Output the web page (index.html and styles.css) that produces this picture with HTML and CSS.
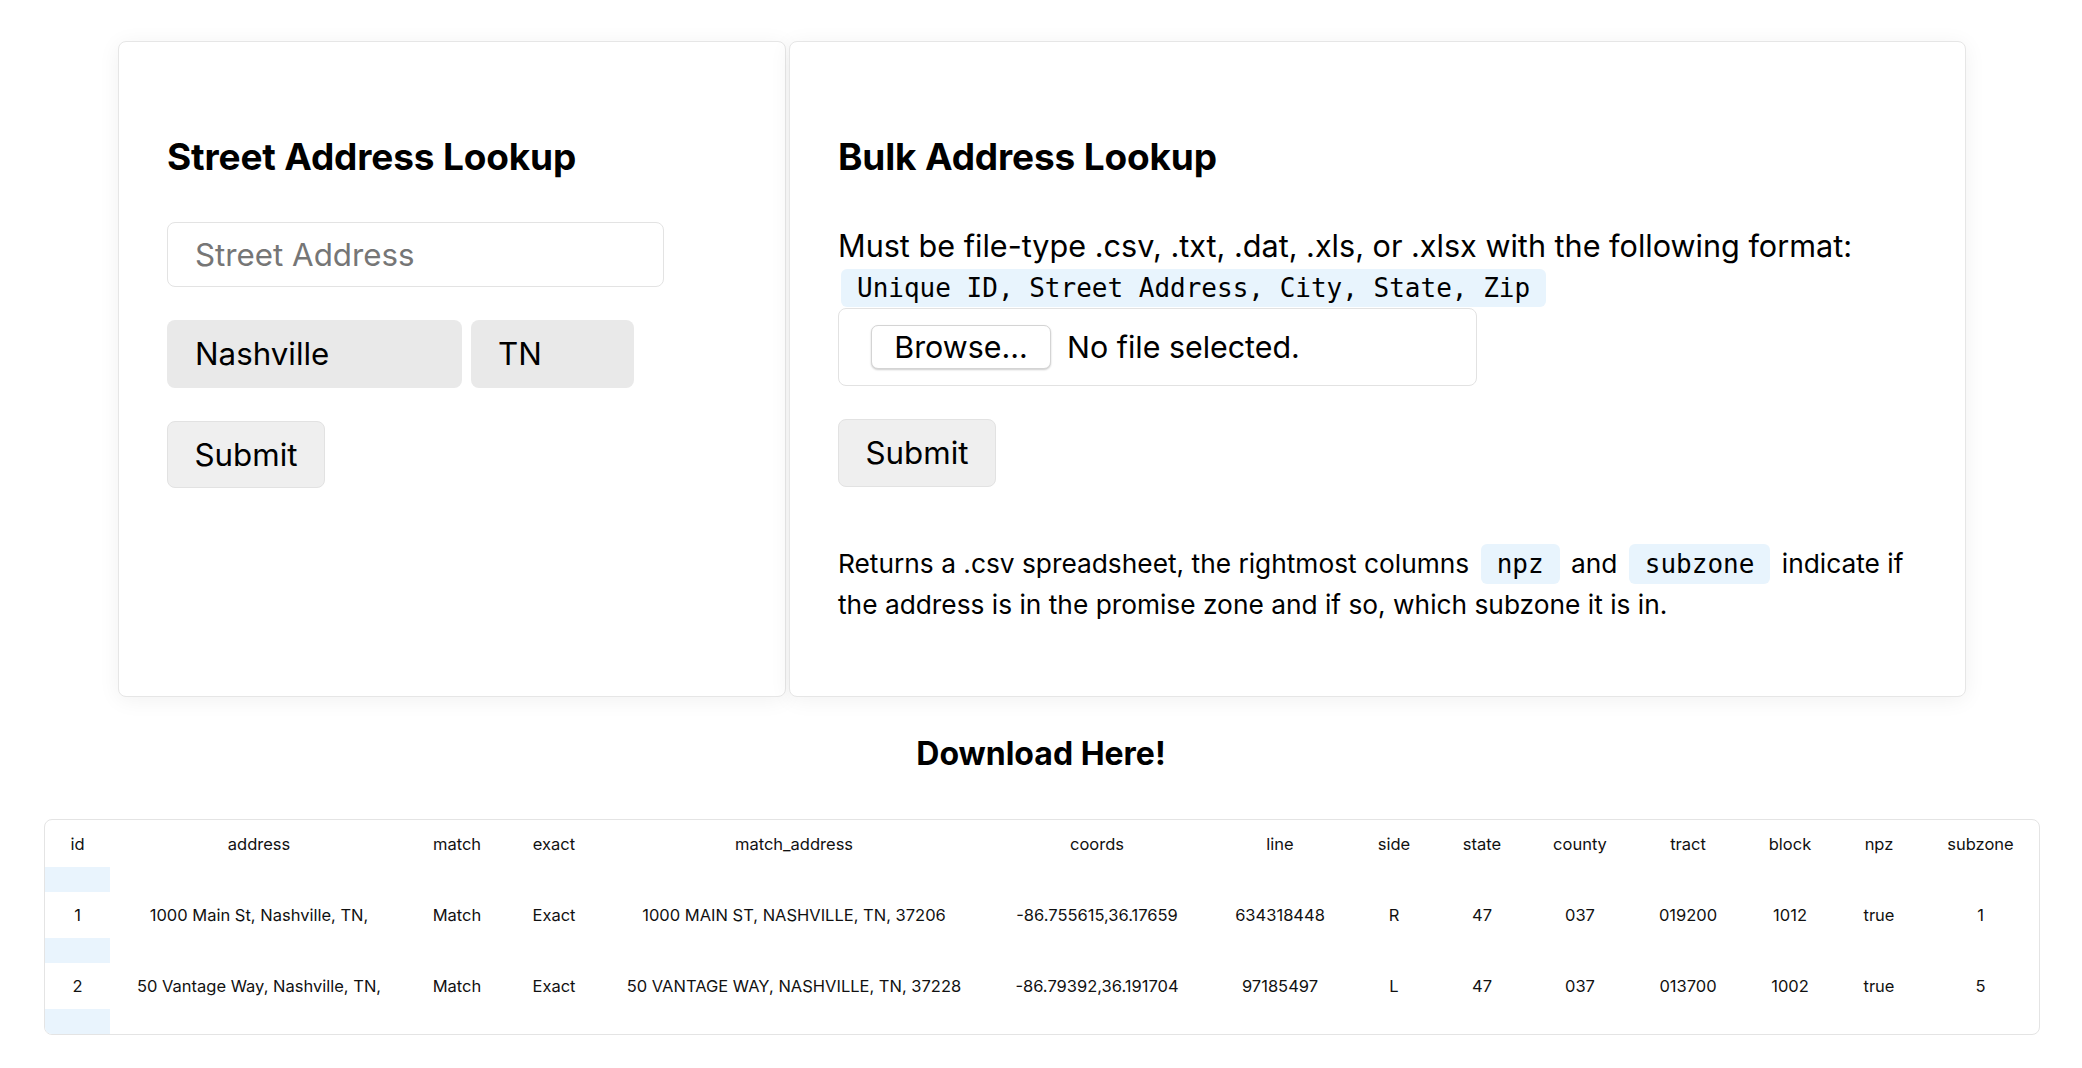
FILE: index.html
```html
<!DOCTYPE html>
<html lang="en">
<head>
<meta charset="utf-8">
<title>Address Lookup</title>
<link rel="stylesheet" href="styles.css">
</head>
<body>
<main class="page">
  <section class="cards">
    <div class="card card-single">
      <h2 class="card-title">Street Address Lookup</h2>
      <input class="street-input" type="text" placeholder="Street Address">
      <div class="locale-row">
        <div class="locale locale-city">Nashville</div>
        <div class="locale locale-state">TN</div>
      </div>
      <button class="submit-btn" type="button">Submit</button>
    </div>
    <div class="card card-bulk">
      <h2 class="card-title">Bulk Address Lookup</h2>
      <p class="format-text">Must be file-type .csv, .txt, .dat, .xls, or .xlsx with the following format:</p>
      <code class="code-block">Unique ID, Street Address, City, State, Zip</code>
      <div class="filebox">
        <span class="browse-btn">Browse...</span>
        <span class="file-status">No file selected.</span>
      </div>
      <button class="submit-btn" type="button">Submit</button>
      <p class="returns-text">Returns a .csv spreadsheet, the rightmost columns <code class="inline-code">npz</code> and <code class="inline-code">subzone</code> indicate if the address is in the promise zone and if so, which subzone it is in.</p>
    </div>
  </section>

  <h3 class="download-title">Download Here!</h3>

  <div class="table-wrap">
    <table class="results">
      <colgroup>
        <col class="c-id"><col class="c-address"><col class="c-match"><col class="c-exact"><col class="c-maddr"><col class="c-coords"><col class="c-line"><col class="c-side"><col class="c-state"><col class="c-county"><col class="c-tract"><col class="c-block"><col class="c-npz"><col class="c-subzone">
      </colgroup>
      <thead>
        <tr class="head-row">
          <th>id</th><th>address</th><th>match</th><th>exact</th><th>match_address</th><th>coords</th><th>line</th><th>side</th><th>state</th><th>county</th><th>tract</th><th>block</th><th>npz</th><th>subzone</th>
        </tr>
      </thead>
      <tbody>
        <tr class="spacer-row"><td></td><td></td><td></td><td></td><td></td><td></td><td></td><td></td><td></td><td></td><td></td><td></td><td></td><td></td></tr>
        <tr class="data-row">
          <td>1</td><td>1000 Main St, Nashville, TN,</td><td>Match</td><td>Exact</td><td>1000 MAIN ST, NASHVILLE, TN, 37206</td><td>-86.755615,36.17659</td><td>634318448</td><td>R</td><td>47</td><td>037</td><td>019200</td><td>1012</td><td>true</td><td>1</td>
        </tr>
        <tr class="spacer-row"><td></td><td></td><td></td><td></td><td></td><td></td><td></td><td></td><td></td><td></td><td></td><td></td><td></td><td></td></tr>
        <tr class="data-row">
          <td>2</td><td>50 Vantage Way, Nashville, TN,</td><td>Match</td><td>Exact</td><td>50 VANTAGE WAY, NASHVILLE, TN, 37228</td><td>-86.79392,36.191704</td><td>97185497</td><td>L</td><td>47</td><td>037</td><td>013700</td><td>1002</td><td>true</td><td>5</td>
        </tr>
        <tr class="spacer-row"><td></td><td></td><td></td><td></td><td></td><td></td><td></td><td></td><td></td><td></td><td></td><td></td><td></td><td></td></tr>
      </tbody>
    </table>
  </div>
</main>
</body>
</html>
```

FILE: styles.css
```css
* { box-sizing: border-box; }

html, body {
  margin: 0;
  padding: 0;
  background: #ffffff;
  color: #000000;
  font-family: Inter, "Noto Sans", "Liberation Sans", sans-serif;
}

.page {
  padding-top: 41px;
}

.cards {
  display: grid;
  grid-template-columns: 668px 1177px;
  gap: 3px;
  justify-content: start;
  margin-left: 118px;
}

.card {
  height: 656px;
  background: #ffffff;
  border: 1px solid #e6e6e6;
  border-radius: 8px;
  box-shadow: 0 3px 22px rgba(0, 0, 0, 0.06);
  padding: 48px;
  display: flex;
  flex-direction: column;
  align-items: flex-start;
}

.card-title {
  margin: 44px 0 0 0;
  font-size: 37px;
  line-height: 45px;
  font-weight: 700;
  letter-spacing: -0.15px;
}

.street-input {
  margin-top: 43px;
  width: 497px;
  height: 65px;
  border: 1px solid #e3e3e3;
  border-radius: 8px;
  padding: 0 27px;
  font-family: inherit;
  font-size: 31.3px;
  color: #000;
  background: #fff;
  outline: none;
}
.street-input::placeholder { color: #767676; }

.locale-row {
  margin-top: 33px;
  display: flex;
  gap: 9px;
}

.locale {
  height: 68px;
  background: #e9e9e9;
  border-radius: 8px;
  font-size: 31.3px;
  display: flex;
  align-items: center;
  padding-left: 28px;
}
.locale-city { width: 295px; }
.locale-state { width: 163px; padding-left: 27px; }

.submit-btn {
  margin-top: 33px;
  width: 158px;
  height: 67px;
  padding: 0;
  text-align: center;
  background: #efefef;
  border: 1px solid #e2e2e2;
  border-radius: 8px;
  font-family: inherit;
  font-size: 31.3px;
  color: #000;
}

.format-text {
  margin: 48px 0 0 0;
  font-size: 30.6px;
  line-height: 38px;
}

.code-block {
  display: block;
  margin: 4px 0 0 3px;
  height: 38px;
  line-height: 38px;
  padding: 0 16px;
  background: #e8f4fd;
  border-radius: 6px;
  font-family: "DejaVu Sans Mono", "Liberation Mono", monospace;
  font-size: 26px;
}

.filebox {
  margin-top: 1px;
  width: 639px;
  height: 78px;
  border: 1px solid #e2e2e2;
  border-radius: 8px;
  display: flex;
  align-items: center;
  padding-left: 32px;
  gap: 16px;
  font-size: 30.4px;
}

.browse-btn {
  height: 44px;
  width: 180px;
  display: flex;
  align-items: center;
  justify-content: center;
  background: #fff;
  border: 1px solid #d4d4d4;
  border-radius: 7px;
  box-shadow: 0 1px 2px rgba(0, 0, 0, 0.2);
}

.card-bulk .submit-btn { height: 68px; }

.returns-text {
  margin: 56px 0 0 0;
  font-size: 26.3px;
  line-height: 41px;
}

.inline-code {
  display: inline-block;
  font-family: "DejaVu Sans Mono", "Liberation Mono", monospace;
  font-size: 26px;
  line-height: 30px;
  background: #e8f4fd;
  border-radius: 6px;
  padding: 5px 16px;
  margin: 0 4px;
  vertical-align: baseline;
}

.download-title {
  margin: 39px 0 0 0;
  text-align: center;
  font-size: 32px;
  line-height: 36px;
  font-weight: 700;
}

.table-wrap {
  margin: 47px 0 0 44px;
  width: 1996px;
  border: 1px solid #e4e4e4;
  border-radius: 8px;
  overflow: hidden;
}

.results {
  width: 100%;
  table-layout: fixed;
  border-collapse: collapse;
  font-size: 16.5px;
  color: #111;
}

.results th,
.results td {
  text-align: center;
  padding: 0;
  white-space: nowrap;
  font-weight: 400;
}

.head-row { height: 47px; }
.data-row { height: 46px; }
.spacer-row { height: 25px; }
.spacer-row td:first-child { background: #e9f4fd; }

.c-id { width: 65px; }
.c-address { width: 298px; }
.c-match { width: 98px; }
.c-exact { width: 96px; }
.c-maddr { width: 384px; }
.c-coords { width: 222px; }
.c-line { width: 144px; }
.c-side { width: 84px; }
.c-state { width: 92px; }
.c-county { width: 104px; }
.c-tract { width: 112px; }
.c-block { width: 92px; }
.c-npz { width: 86px; }
.c-subzone { width: 117px; }
```
